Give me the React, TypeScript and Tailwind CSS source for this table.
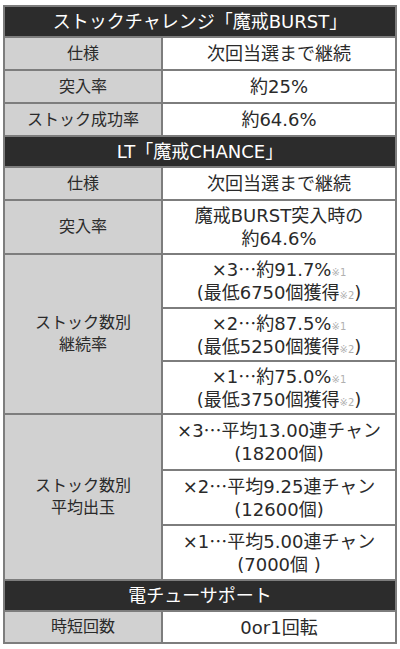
const font = { fontFamily: '"DejaVu Sans", "Noto Sans CJK JP", sans-serif' };

function Head({ children }: { children: React.ReactNode }) {
  return (
    <tr className="h-[31px]">
      <td
        colSpan={2}
        className="border-2 border-[#7d7d7d] bg-[#2c2c2c] p-0 text-center text-[18px] leading-[22px] text-white"
      >
        {children}
      </td>
    </tr>
  );
}

function Note({ n }: { n: number }) {
  return <span className="text-[10px] leading-none text-[#b0b0b0]">※{n}</span>;
}

// CJK ellipsis sits mid-height like the reference
function Dots() {
  return <span className="font-['Noto_Sans_CJK_JP',sans-serif] leading-none">…</span>;
}

const th =
  'w-[158px] border-2 border-[#7d7d7d] bg-[#d1d1d1] p-0 text-center text-[16px] leading-[22px] text-[#2a2a2a]';
const td =
  'border-2 border-[#7d7d7d] bg-white p-0 text-center text-[18px] leading-[23px] text-[#2a2a2a]';

export default function App() {
  return (
    <div className="bg-white pl-[3px] pt-[5px]" style={font}>
      <table className="w-[394px] border-collapse">
        <tbody>
          <Head>ストックチャレンジ「魔戒BURST」</Head>
          <tr className="h-[33px]">
            <td className={th}>仕様</td>
            <td className={td}>次回当選まで継続</td>
          </tr>
          <tr className="h-[33px]">
            <td className={th}>突入率</td>
            <td className={td}>約25%</td>
          </tr>
          <tr className="h-[33px]">
            <td className={th}>ストック成功率</td>
            <td className={td}>約64.6%</td>
          </tr>
          <Head>LT「魔戒CHANCE」</Head>
          <tr className="h-[33px]">
            <td className={th}>仕様</td>
            <td className={td}>次回当選まで継続</td>
          </tr>
          <tr className="h-[54px]">
            <td className={th}>突入率</td>
            <td className={td}>
              魔戒BURST突入時の
              <br />
              約64.6%
            </td>
          </tr>
          <tr className="h-[54px]">
            <td rowSpan={3} className={th}>
              ストック数別
              <br />
              継続率
            </td>
            <td className={td}>
              ×3<Dots />約91.7%<Note n={1} />
              <br />
              (最低6750個獲得<Note n={2} />)
            </td>
          </tr>
          <tr className="h-[53px]">
            <td className={td}>
              ×2<Dots />約87.5%<Note n={1} />
              <br />
              (最低5250個獲得<Note n={2} />)
            </td>
          </tr>
          <tr className="h-[53px]">
            <td className={td}>
              ×1<Dots />約75.0%<Note n={1} />
              <br />
              (最低3750個獲得<Note n={2} />)
            </td>
          </tr>
          <tr className="h-[56px]">
            <td rowSpan={3} className={th}>
              ストック数別
              <br />
              平均出玉
            </td>
            <td className={td}>
              ×3<Dots />平均13.00連チャン
              <br />
              (18200個)
            </td>
          </tr>
          <tr className="h-[55px]">
            <td className={td}>
              ×2<Dots />平均9.25連チャン
              <br />
              (12600個)
            </td>
          </tr>
          <tr className="h-[55px]">
            <td className={td}>
              ×1<Dots />平均5.00連チャン
              <br />
              (7000個 )
            </td>
          </tr>
          <Head>電チューサポート</Head>
          <tr className="h-[32px]">
            <td className={th}>時短回数</td>
            <td className={td}>0or1回転</td>
          </tr>
        </tbody>
      </table>
    </div>
  );
}
